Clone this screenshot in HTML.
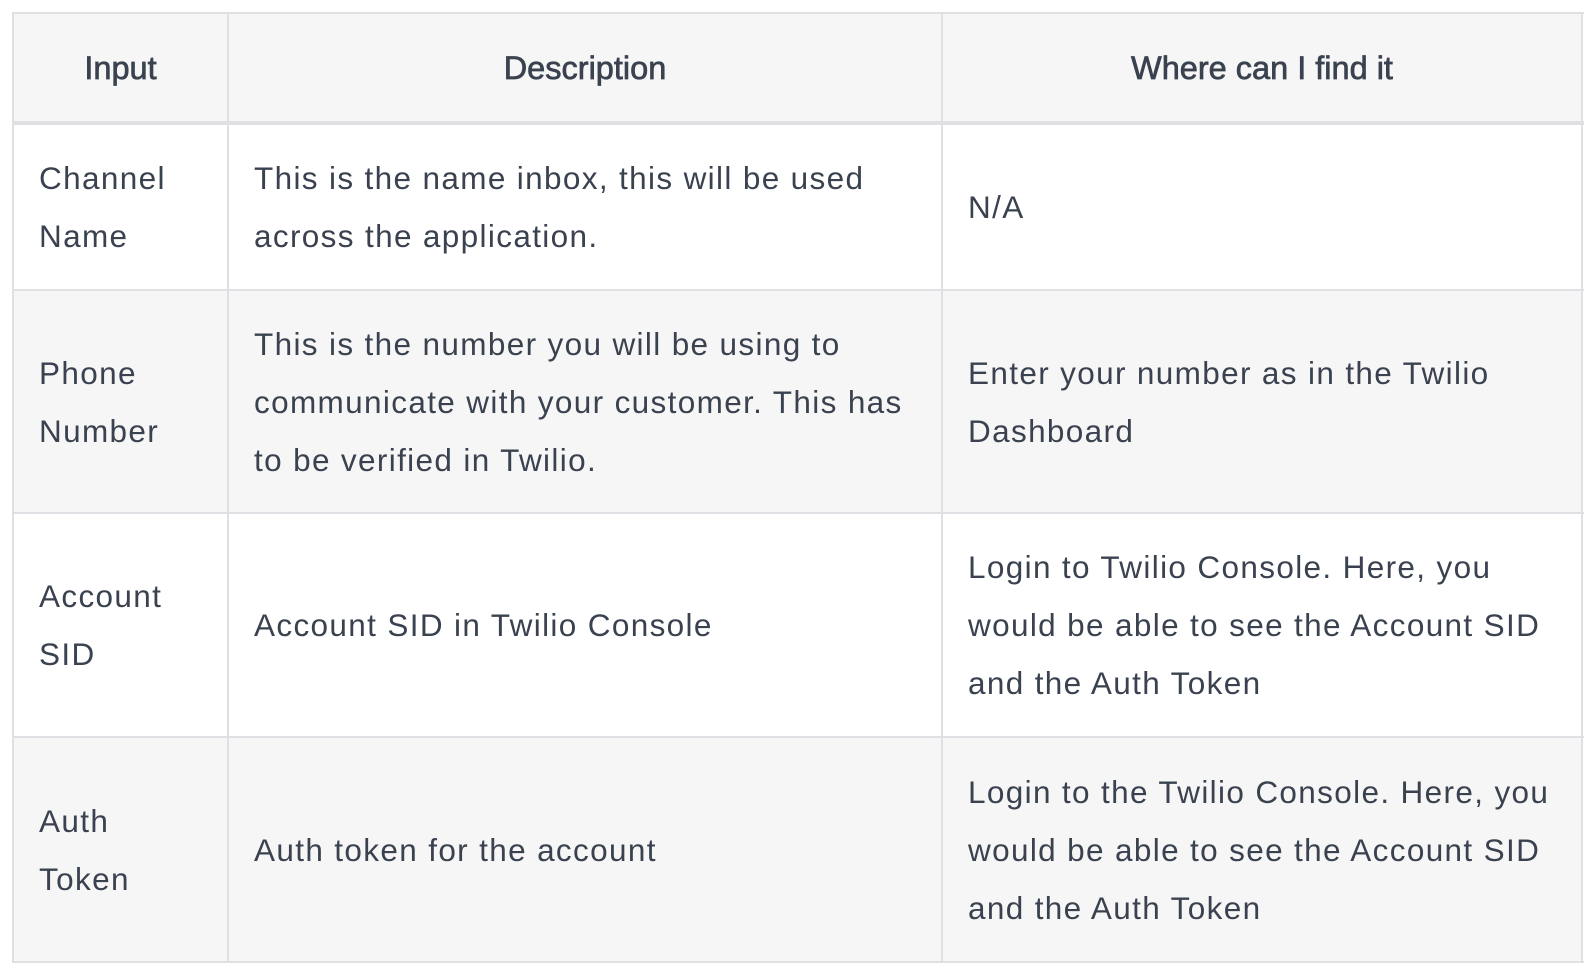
<!DOCTYPE html>
<html><head><style>
html,body{margin:0;padding:0;background:#fff;width:1594px;height:974px;overflow:hidden;position:relative}
.c{position:absolute;box-sizing:border-box;display:flex;align-items:center;padding:0 26px;font-family:"Liberation Sans",sans-serif;color:#3a4250;font-size:31.5px;line-height:58px;letter-spacing:1.35px}
.h{justify-content:center;font-size:32.5px;letter-spacing:0;-webkit-text-stroke:0.7px #3a4250;background:#f6f6f6}
.g{background:#f6f6f6}
.l{position:absolute;background:#dfe0e3}
</style></head><body>
<div class="c h" style="left:13px;top:13px;width:215px;height:110px">Input</div>
<div class="c h" style="left:228px;top:13px;width:714px;height:110px">Description</div>
<div class="c h" style="left:942px;top:13px;width:640px;height:110px">Where can I find it</div>

<div class="c" style="left:13px;top:123px;width:215px;height:167px">Channel<br>Name</div>
<div class="c" style="left:228px;top:123px;width:714px;height:167px"><div>This is the name inbox, this will be used across the application.</div></div>
<div class="c" style="left:942px;top:123px;width:640px;height:167px">N/A</div>

<div class="c g" style="left:13px;top:290px;width:215px;height:223px">Phone<br>Number</div>
<div class="c g" style="left:228px;top:290px;width:714px;height:223px"><div>This is the number you will be using to communicate with your customer. This has to be verified in Twilio.</div></div>
<div class="c g" style="left:942px;top:290px;width:640px;height:223px"><div>Enter your number as in the Twilio Dashboard</div></div>

<div class="c" style="left:13px;top:513px;width:215px;height:224px">Account<br>SID</div>
<div class="c" style="left:228px;top:513px;width:714px;height:224px">Account SID in Twilio Console</div>
<div class="c" style="left:942px;top:513px;width:640px;height:224px"><div>Login to Twilio Console. Here, you would be able to see the Account SID and the Auth Token</div></div>

<div class="c g" style="left:13px;top:737px;width:215px;height:225px">Auth<br>Token</div>
<div class="c g" style="left:228px;top:737px;width:714px;height:225px">Auth token for the account</div>
<div class="c g" style="left:942px;top:737px;width:640px;height:225px"><div>Login to the Twilio Console. Here, you would be able to see the Account SID and the Auth Token</div></div>

<div class="l" style="left:12px;top:12px;width:1572px;height:2px"></div>
<div class="l" style="left:12px;top:121px;width:1572px;height:4px"></div>
<div class="l" style="left:12px;top:289px;width:1572px;height:2px"></div>
<div class="l" style="left:12px;top:512px;width:1572px;height:2px"></div>
<div class="l" style="left:12px;top:736px;width:1572px;height:2px"></div>
<div class="l" style="left:12px;top:961px;width:1572px;height:2px"></div>
<div class="l" style="left:12px;top:12px;width:2px;height:951px"></div>
<div class="l" style="left:227px;top:12px;width:2px;height:951px"></div>
<div class="l" style="left:941px;top:12px;width:2px;height:951px"></div>
<div class="l" style="left:1581px;top:12px;width:2px;height:951px"></div>
</body></html>
